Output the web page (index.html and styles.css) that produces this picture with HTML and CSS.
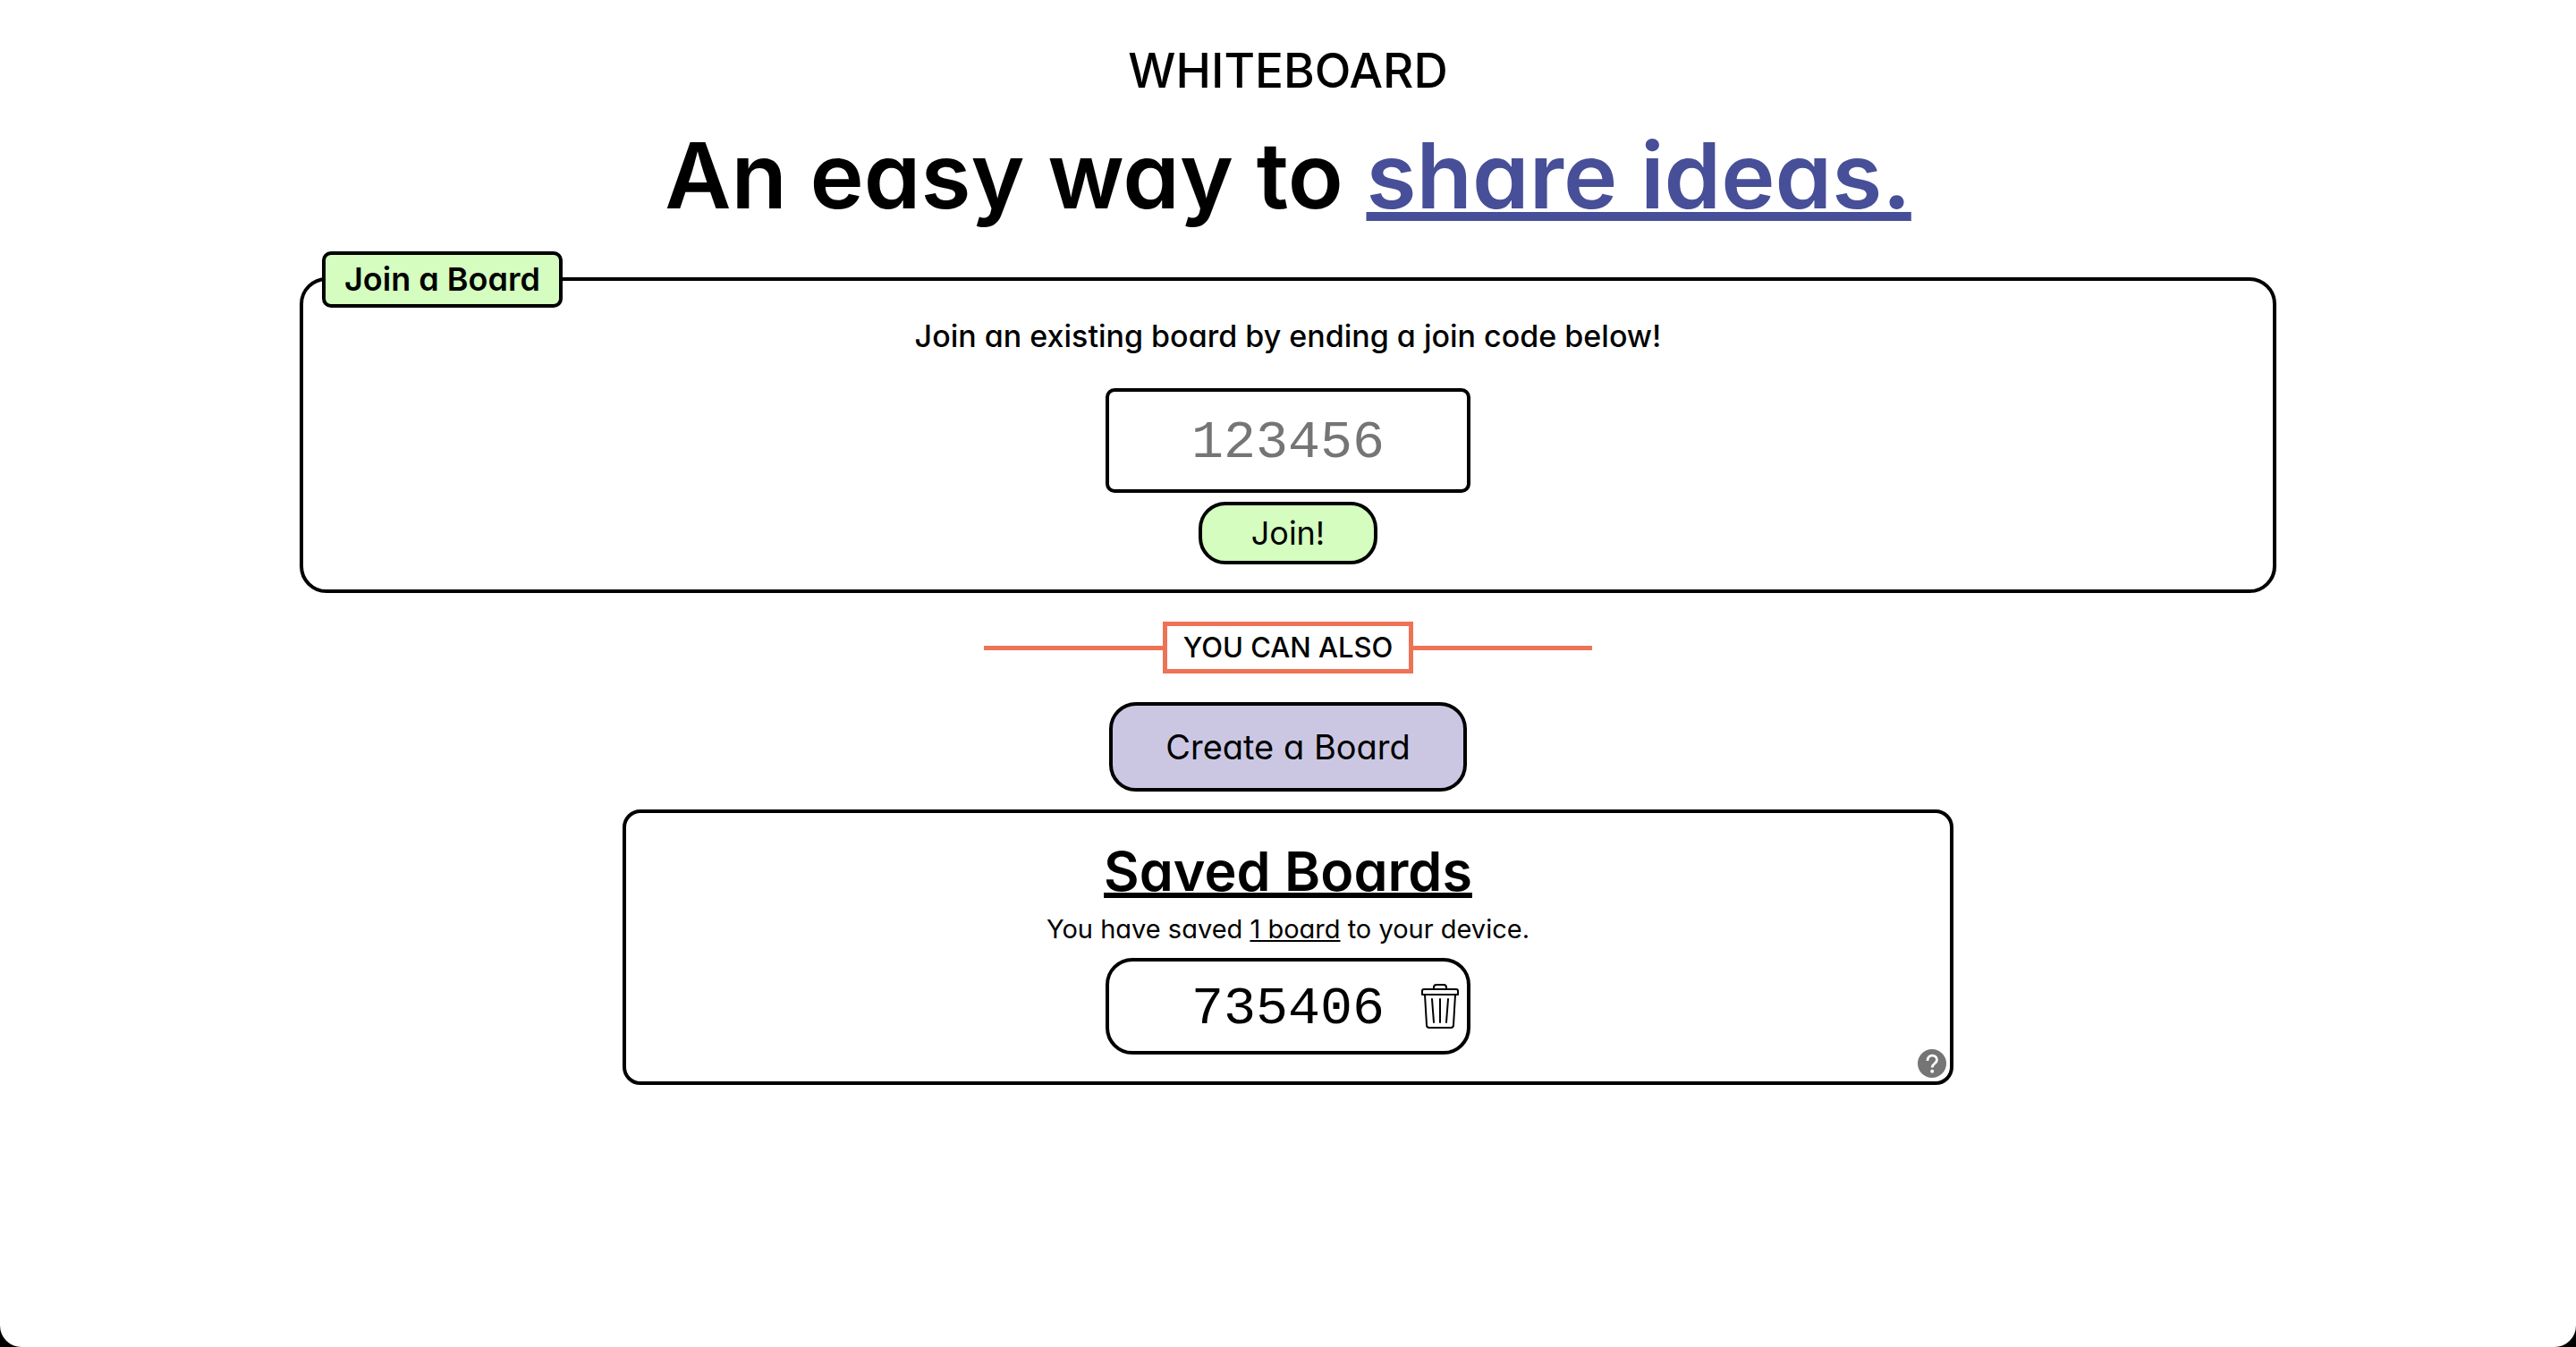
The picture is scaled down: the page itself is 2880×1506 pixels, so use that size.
FILE: index.html
```html
<!DOCTYPE html>
<html lang="en">
<head>
<meta charset="utf-8">
<meta name="viewport" content="width=device-width, initial-scale=1">
<title>Whiteboard</title>
<link rel="stylesheet" href="styles.css">
</head>
<body>
<header class="intro">
  <h2 class="brand">WHITEBOARD</h2>
  <h1 class="tagline">An easy way to <span class="tagline-accent">share ideas.</span></h1>
</header>
<main class="page">
  <form class="join-card">
    <h2 class="join-tag">Join a Board</h2>
    <label class="join-label" for="code">Join an existing board by ending a join code below!</label>
    <input class="join-input" id="code" type="text" inputmode="numeric" maxlength="6" placeholder="123456">
    <button class="button button-join" type="submit">Join!</button>
  </form>
  <div class="divider"><span class="divider-text">YOU CAN ALSO</span></div>
  <button class="button button-create" type="button">Create a Board</button>
  <section class="saved-card">
    <h2 class="saved-title">Saved Boards</h2>
    <p class="saved-text">You have saved <u class="saved-count">1 board</u> to your device.</p>
    <div class="saved-item">
      <a class="saved-code" href="#735406">735406</a>
      <button class="delete" type="button" aria-label="Delete board">
        <svg class="delete-icon" viewBox="0 0 42 50" fill="none" stroke="#000" stroke-width="2" stroke-linejoin="round" stroke-linecap="round">
          <path d="M14 6V4Q14 1 17 1H25Q28 1 28 4V6"/>
          <path d="M3 6H39Q41 6 41 8V12H1V8Q1 6 3 6Z"/>
          <path d="M4 12L6 46Q6 49 9 49H33Q36 49 36 46L38 12"/>
          <path d="M12 17L14 43M21 17V43M30 17L28 43"/>
        </svg>
      </button>
    </div>
    <button class="help" type="button" aria-label="Help">
      <svg class="help-icon" viewBox="0 0 32 32">
        <circle cx="16" cy="16" r="16" fill="#757575"/>
        <path d="M11 13C11 5 21.500 5.500 21.500 12C21.500 16 16.200 16 16.200 20.500" fill="none" stroke="#fff" stroke-width="2.800"/>
        <circle cx="16.200" cy="24.800" r="2" fill="#fff"/>
      </svg>
    </button>
  </section>
</main>
</body>
</html>
```
FILE: styles.css
```css
* {
  box-sizing: border-box;
}

html {
  background: #000;
}

body {
  margin: 0;
  min-height: 100vh;
  padding: 43px 0 48px;
  border-radius: 0 0 24px 24px;
  background: #fff;
  color: #000;
  font-family: Inter, "Open Sans", sans-serif;
  font-feature-settings: "cv11" 1;
}

h1,
h2,
p {
  margin: 0;
}

button,
input {
  font-family: inherit;
  font-feature-settings: inherit;
  color: inherit;
}

button {
  cursor: pointer;
}

.intro {
  display: flex;
  flex-direction: column;
  align-items: center;
  gap: 21px;
  text-align: center;
}

.brand {
  font-size: 53px;
  line-height: 72px;
  font-weight: 500;
}

.tagline {
  font-size: 102px;
  line-height: 120px;
  font-weight: 600;
}

.tagline-accent {
  color: #474f98;
  text-decoration: underline 10px;
  text-underline-offset: 4px;
  text-decoration-skip-ink: none;
}

.page {
  display: flex;
  flex-direction: column;
  align-items: center;
  margin-top: 54px;
  padding: 0 335px;
}

.join-card {
  position: relative;
  display: flex;
  flex-direction: column;
  align-items: center;
  width: 100%;
  padding: 40px 24px 28px;
  border: 4px solid #000;
  border-radius: 30px;
}

.join-tag {
  position: absolute;
  top: -33px;
  left: 21px;
  padding: 5px 21px;
  border: 4px solid #000;
  border-radius: 10px;
  background: #d4fdbf;
  font-size: 36px;
  line-height: 45px;
  font-weight: 600;
}

.join-label {
  margin-bottom: 36px;
  font-size: 34px;
  line-height: 44px;
  font-weight: 500;
}

.join-input {
  width: 408px;
  height: 117px;
  margin-bottom: 10px;
  padding: 4px 0 0;
  border: 4px solid #000;
  border-radius: 10px;
  background: #fff;
  font-family: "Liberation Mono", monospace;
  font-size: 60px;
  text-align: center;
}

.join-input::placeholder {
  color: #757575;
}

.button {
  border: 4px solid #000;
  border-radius: 30px;
  line-height: 44px;
}

.button-join {
  min-width: 200px;
  padding: 9px 24px;
  background: #d4fdbf;
  font-size: 36px;
}

.button-create {
  min-width: 400px;
  padding: 24px;
  background: #cbc7e3;
  font-size: 38px;
}

.divider {
  display: flex;
  align-items: center;
  width: 680px;
  margin: 32px 0;
}

.divider::before,
.divider::after {
  content: "";
  flex: 1;
  height: 5px;
  background: #ee7356;
}

.divider-text {
  min-width: 280px;
  padding: 2px 16px;
  border: 5px solid #ee7356;
  font-size: 31px;
  line-height: 44px;
  font-weight: 500;
  text-align: center;
}

.saved-card {
  position: relative;
  display: flex;
  flex-direction: column;
  align-items: center;
  width: 100%;
  max-width: 1488px;
  margin-top: 20px;
  padding: 29px 24px 30px;
  border: 4px solid #000;
  border-radius: 20px;
}

.saved-title {
  font-size: 61px;
  line-height: 72px;
  font-weight: 600;
  text-decoration: underline 6px;
  text-underline-offset: 2px;
  text-decoration-skip-ink: none;
}

.saved-text {
  margin: 9px 0 12px;
  font-size: 29px;
  line-height: 40px;
}

.saved-count {
  text-decoration-thickness: 2px;
  text-underline-offset: 2px;
}

.saved-item {
  display: grid;
  grid-template-columns: 1fr auto 1fr;
  align-items: center;
  width: 408px;
  height: 108px;
  border: 4px solid #000;
  border-radius: 30px;
}

.saved-code {
  grid-column: 2;
  padding-top: 6px;
  color: inherit;
  font-family: "Liberation Mono", monospace;
  font-size: 60px;
  text-decoration: none;
}

.delete,
.help {
  display: block;
  padding: 0;
  border: 0;
  background: none;
}

.delete {
  justify-self: end;
  margin-right: 9px;
}

.delete-icon {
  display: block;
  width: 42px;
  height: 50px;
}

.help {
  position: absolute;
  right: 4px;
  bottom: 4px;
}

.help-icon {
  display: block;
  width: 32px;
  height: 32px;
}
```
